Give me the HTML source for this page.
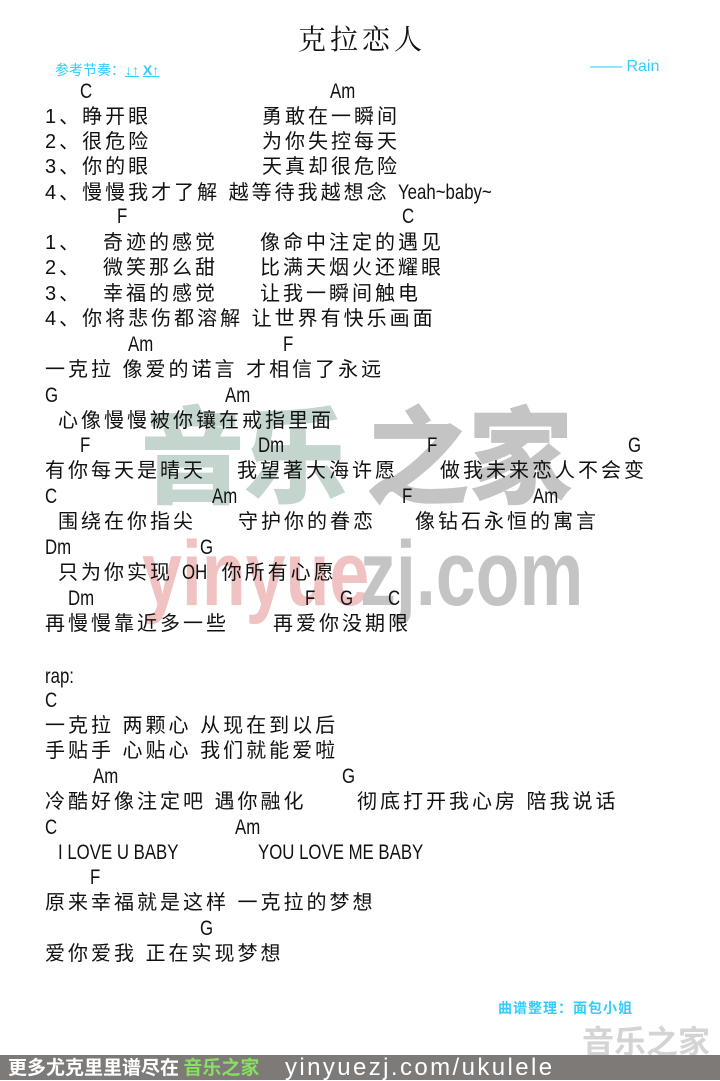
<!DOCTYPE html>
<html><head><meta charset="utf-8"><style>
body{margin:0;width:720px;height:1080px;background:#fff;position:relative;overflow:hidden;font-family:"Liberation Sans","Noto Sans CJK SC",sans-serif;color:#111}
.t{position:absolute;font-size:20px;line-height:24px;white-space:pre;letter-spacing:3px}
.c{position:absolute;font-size:21px;line-height:24px;white-space:pre;transform:scaleX(.8);transform-origin:left}
.wm{position:absolute;font-weight:bold;white-space:pre;line-height:1}
.cy{color:#33ccff;position:absolute;white-space:pre}
.l{display:inline-block;transform:scaleX(.8);transform-origin:left;letter-spacing:0;font-size:21px}
</style></head><body>
<div class="wm" style="left:140px;top:398px;font-size:105px;color:#c3d5cc;font-family:'Noto Sans CJK SC',sans-serif;font-weight:900;letter-spacing:-2px">音乐</div>
<div class="wm" style="left:365px;top:398px;font-size:105px;color:#c4c4c4;font-family:'Noto Sans CJK SC',sans-serif;font-weight:900;letter-spacing:-2px">之家</div>
<div class="wm" style="left:142px;top:528px;font-size:92px;color:#f0c2c2;transform:scaleX(.78);transform-origin:left">yinyue</div>
<div class="wm" style="left:360px;top:528px;font-size:92px;color:#c4c4c4;transform:scaleX(.78);transform-origin:left">zj.com</div>

<div style="position:absolute;left:298px;top:18px;font-size:28px;letter-spacing:4px;font-family:'Noto Serif CJK SC',serif">克拉恋人</div>
<div class="cy" style="left:55px;top:60px;font-size:14px">参考节奏：<span style="text-decoration:underline;font-weight:bold">↓↑</span> <span style="text-decoration:underline;font-weight:bold">X↑</span></div>
<div class="cy" style="left:590px;top:58px;font-size:16px">—— Rain</div>

<div class="c" style="left:80px;top:80px">C</div><div class="c" style="left:330px;top:80px">Am</div>
<div class="t" style="left:45px;top:105px">1、睁开眼</div><div class="t" style="left:262px;top:105px">勇敢在一瞬间</div>
<div class="t" style="left:45px;top:130px">2、很危险</div><div class="t" style="left:262px;top:130px">为你失控每天</div>
<div class="t" style="left:45px;top:155px">3、你的眼</div><div class="t" style="left:262px;top:155px">天真却很危险</div>
<div class="t" style="left:45px;top:181px">4、慢慢我才了解 越等待我越想念 <span class="l">Yeah~baby~</span></div>
<div class="c" style="left:117px;top:205px">F</div><div class="c" style="left:402px;top:205px">C</div>
<div class="t" style="left:45px;top:231px">1、</div><div class="t" style="left:103px;top:231px">奇迹的感觉</div><div class="t" style="left:260px;top:231px">像命中注定的遇见</div>
<div class="t" style="left:45px;top:256px">2、</div><div class="t" style="left:103px;top:256px">微笑那么甜</div><div class="t" style="left:260px;top:256px">比满天烟火还耀眼</div>
<div class="t" style="left:45px;top:282px">3、</div><div class="t" style="left:103px;top:282px">幸福的感觉</div><div class="t" style="left:260px;top:282px">让我一瞬间触电</div>
<div class="t" style="left:45px;top:307px">4、你将悲伤都溶解 让世界有快乐画面</div>
<div class="c" style="left:128px;top:333px">Am</div><div class="c" style="left:283px;top:333px">F</div>
<div class="t" style="left:45px;top:358px">一克拉 像爱的诺言 才相信了永远</div>
<div class="c" style="left:45px;top:384px">G</div><div class="c" style="left:225px;top:384px">Am</div>
<div class="t" style="left:58px;top:409px">心像慢慢被你镶在戒指里面</div>
<div class="c" style="left:80px;top:434px">F</div><div class="c" style="left:258px;top:434px">Dm</div><div class="c" style="left:427px;top:434px">F</div><div class="c" style="left:628px;top:434px">G</div>
<div class="t" style="left:45px;top:459px">有你每天是晴天</div><div class="t" style="left:237px;top:459px">我望著大海许愿</div><div class="t" style="left:440px;top:459px">做我未来恋人不会变</div>
<div class="c" style="left:45px;top:485px">C</div><div class="c" style="left:212px;top:485px">Am</div><div class="c" style="left:402px;top:485px">F</div><div class="c" style="left:533px;top:485px">Am</div>
<div class="t" style="left:58px;top:510px">围绕在你指尖</div><div class="t" style="left:238px;top:510px">守护你的眷恋</div><div class="t" style="left:415px;top:510px">像钻石永恒的寓言</div>
<div class="c" style="left:45px;top:536px">Dm</div><div class="c" style="left:200px;top:536px">G</div>
<div class="t" style="left:58px;top:561px">只为你实现 <span class="l">OH</span> 你所有心愿</div>
<div class="c" style="left:68px;top:587px">Dm</div><div class="c" style="left:305px;top:587px">F</div><div class="c" style="left:340px;top:587px">G</div><div class="c" style="left:388px;top:587px">C</div>
<div class="t" style="left:45px;top:612px">再慢慢靠近多一些</div><div class="t" style="left:273px;top:612px">再爱你没期限</div>
<div class="c" style="left:45px;top:665px">rap:</div>
<div class="c" style="left:45px;top:689px">C</div>
<div class="t" style="left:45px;top:714px">一克拉 两颗心 从现在到以后</div>
<div class="t" style="left:45px;top:739px">手贴手 心贴心 我们就能爱啦</div>
<div class="c" style="left:93px;top:765px">Am</div><div class="c" style="left:342px;top:765px">G</div>
<div class="t" style="left:45px;top:790px">冷酷好像注定吧 遇你融化</div><div class="t" style="left:357px;top:790px">彻底打开我心房 陪我说话</div>
<div class="c" style="left:45px;top:816px">C</div><div class="c" style="left:235px;top:816px">Am</div>
<div class="c" style="left:58px;top:841px">I LOVE U BABY</div><div class="c" style="left:258px;top:841px">YOU LOVE ME BABY</div>
<div class="c" style="left:90px;top:866px">F</div>
<div class="t" style="left:45px;top:891px">原来幸福就是这样 一克拉的梦想</div>
<div class="c" style="left:200px;top:917px">G</div>
<div class="t" style="left:45px;top:942px">爱你爱我 正在实现梦想</div>

<div class="cy" style="left:498px;top:998px;font-size:14px;letter-spacing:1px;font-weight:bold">曲谱整理：面包小姐</div>
<div class="wm" style="left:582px;top:1024px;font-size:32px;color:#d4d4d4;font-family:'Noto Sans CJK SC',sans-serif">音乐之家</div>
<div style="position:absolute;left:0;top:1055px;width:720px;height:25px;background:#7d7a78"></div>
<div class="wm" style="left:8px;top:1057px;font-size:19px;color:#fff;font-family:'Noto Sans CJK SC',sans-serif">更多尤克里里谱尽在 <span style="color:#88e060">音乐之家</span></div>
<div class="wm" style="left:285px;top:1056px;font-size:24px;color:#fff;font-weight:normal;letter-spacing:2.4px">yinyuezj.com/ukulele</div>
</body></html>
